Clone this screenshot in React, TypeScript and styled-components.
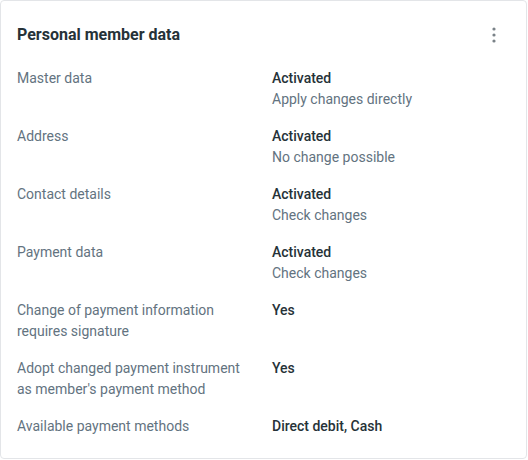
import React from "react";
import styled, { createGlobalStyle } from "styled-components";

const Global = createGlobalStyle`
  html, body { margin: 0; padding: 0; background: #ffffff; }
  body { font-family: Roboto, "Noto Sans", "Liberation Sans", sans-serif; }
  * { box-sizing: border-box; }
`;

const Card = styled.section`
  width: 527px;
  height: 459px;
  border: 1px solid #e3e5e8;
  border-radius: 4px;
  background: #fff;
  padding: 24px 16px 0 16px;
  display: flex;
  flex-direction: column;
`;

const Header = styled.header`
  display: flex;
  align-items: center;
  justify-content: space-between;
  height: 20px;
  margin-bottom: 23px;
`;

const Title = styled.h2`
  margin: 0;
  font-size: 16px;
  line-height: 20px;
  font-weight: 700;
  color: #263238;
`;

const MenuButton = styled.button`
  width: 24px;
  height: 24px;
  padding: 0;
  margin-right: 4px;
  border: none;
  background: transparent;
  display: flex;
  align-items: center;
  justify-content: center;
  color: #7a8288;
  cursor: pointer;
`;

const List = styled.dl`
  margin: 0;
  display: grid;
  grid-template-columns: 255px 1fr;
  row-gap: 16px;
  font-size: 14px;
  line-height: 21px;
`;

const Label = styled.dt`
  margin: 0;
  color: #63737f;
  padding-right: 16px;
`;

const Value = styled.dd`
  margin: 0;
  display: flex;
  flex-direction: column;
`;

const Strong = styled.span`
  font-weight: 500;
  color: #263238;
`;

const Sub = styled.span`
  color: #63737f;
`;

const rows: { label: string; value: string; sub?: string }[] = [
  { label: "Master data", value: "Activated", sub: "Apply changes directly" },
  { label: "Address", value: "Activated", sub: "No change possible" },
  { label: "Contact details", value: "Activated", sub: "Check changes" },
  { label: "Payment data", value: "Activated", sub: "Check changes" },
  { label: "Change of payment information requires signature", value: "Yes" },
  { label: "Adopt changed payment instrument as member's payment method", value: "Yes" },
  { label: "Available payment methods", value: "Direct debit, Cash" },
];

export default function App() {
  return (
    <>
      <Global />
      <Card>
        <Header>
          <Title>Personal member data</Title>
          <MenuButton aria-label="More">
            <svg width="24" height="24" viewBox="0 0 24 24" fill="currentColor">
              <circle cx="12" cy="6" r="1.6" />
              <circle cx="12" cy="12" r="1.6" />
              <circle cx="12" cy="18" r="1.6" />
            </svg>
          </MenuButton>
        </Header>
        <List>
          {rows.map((r) => (
            <React.Fragment key={r.label}>
              <Label>{r.label}</Label>
              <Value>
                <Strong>{r.value}</Strong>
                {r.sub && <Sub>{r.sub}</Sub>}
              </Value>
            </React.Fragment>
          ))}
        </List>
      </Card>
    </>
  );
}
